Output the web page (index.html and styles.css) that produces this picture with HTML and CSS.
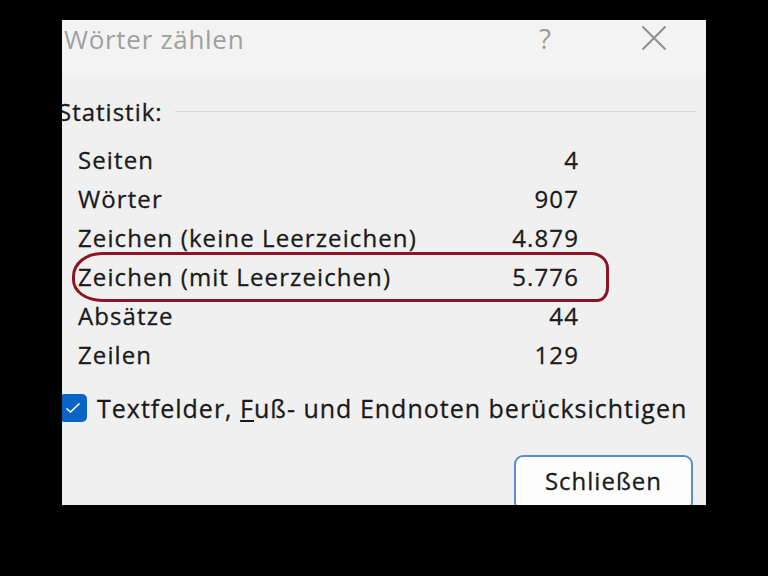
FILE: index.html
```html
<!DOCTYPE html>
<html lang="de">

<head>
    <meta charset="UTF-8">
    <meta name="viewport" content="width=device-width, initial-scale=1.0">
    <title>Wörter zählen</title>
    <link rel="stylesheet" href="styles.css">
</head>

<body>
    <div class="dialog">
        <div class="titlebar">
            <span class="title">Wörter zählen</span>
            <span class="help">?</span>
            <svg class="close" width="26" height="26" viewBox="0 0 26 26">
                <path d="M1.5 1.5 L24.5 24.5 M24.5 1.5 L1.5 24.5" stroke="#8e8e8e" stroke-width="2" fill="none"/>
            </svg>
        </div>

        <div class="group-header">
            <span class="group-label">Statistik:</span>
            <span class="group-line"></span>
        </div>

        <div class="stats">
            <div class="stat-row"><span>Seiten</span><span>4</span></div>
            <div class="stat-row"><span>Wörter</span><span>907</span></div>
            <div class="stat-row"><span>Zeichen (keine Leerzeichen)</span><span>4.879</span></div>
            <div class="stat-row"><span>Zeichen (mit Leerzeichen)</span><span>5.776</span></div>
            <div class="stat-row"><span>Absätze</span><span>44</span></div>
            <div class="stat-row"><span>Zeilen</span><span>129</span></div>
            <div class="highlight"></div>
        </div>

        <label class="check-row">
            <span class="checkbox">
                <svg width="16" height="12" viewBox="0 0 16 12">
                    <path d="M1.5 6.5 L5.5 10 L14.5 1.5" stroke="#ffffff" stroke-width="1.6" fill="none"/>
                </svg>
            </span>
            <span>Textfelder, <u>F</u>uß- und Endnoten berücksichtigen</span>
        </label>

        <div class="actions">
            <button class="close-button">Schließen</button>
        </div>
    </div>
</body>

</html>
```

FILE: styles.css
```css
body {
    margin: 0;
    background-color: #000;
    font-family: "Open Sans", "Noto Sans", sans-serif;
}

.dialog {
    width: 644px;
    height: 485px;
    margin: 20px 0 0 62px;
    background-color: #f0f0f0;
    overflow: hidden;
    display: flex;
    flex-direction: column;
    color: #1a1a1a;
}

.titlebar {
    height: 57px;
    flex-shrink: 0;
    background-color: #f3f3f3;
    display: flex;
    align-items: center;
    padding: 0 39px 0 2px;
}

.title {
    flex: 1;
    font-size: 26px;
    letter-spacing: 0.7px;
    color: #a0a0a0;
    margin-bottom: 19px;
}

.help {
    font-size: 27px;
    color: #9a9a9a;
    margin-right: 90px;
    margin-bottom: 21px;
}

.close {
    margin-bottom: 21px;
}

.group-header {
    display: flex;
    align-items: center;
    height: 28px;
    margin-top: 20px;
}

.group-label {
    font-size: 24px;
    letter-spacing: 1px;
    margin-left: -4px;
    -webkit-text-stroke: 0.3px #1a1a1a;
}

.group-line {
    flex: 1;
    height: 1px;
    background-color: #d9d9d9;
    margin: 0 10px 0 12px;
}

.stats {
    position: relative;
    width: 517px;
    box-sizing: border-box;
    padding-left: 16px;
    margin-top: 15px;
}

.stat-row {
    display: flex;
    justify-content: space-between;
    align-items: center;
    height: 39px;
    font-size: 24px;
    letter-spacing: 1.1px;
    -webkit-text-stroke: 0.3px #1a1a1a;
}

.highlight {
    position: absolute;
    left: 10px;
    top: 112px;
    width: 531px;
    height: 44px;
    border: 3px solid #8b1526;
    border-radius: 30px 18px 12px 30px / 24px 16px 14px 22px;
}

.check-row {
    display: flex;
    align-items: center;
    height: 30px;
    margin-top: 19px;
    font-size: 25px;
    letter-spacing: 1px;
    -webkit-text-stroke: 0.3px #1a1a1a;
}

.checkbox {
    width: 28px;
    height: 28px;
    flex-shrink: 0;
    margin-left: -3px;
    margin-right: 10px;
    border-radius: 5px;
    background-color: #0a64c6;
    display: flex;
    align-items: center;
    justify-content: center;
}

.actions {
    display: flex;
    justify-content: flex-end;
    margin-top: 32px;
    padding-right: 13px;
}

.close-button {
    width: 179px;
    height: 56px;
    padding-bottom: 6px;
    background-color: #fdfdfd;
    border: 2px solid #5b8fc5;
    border-radius: 9px;
    font-family: inherit;
    font-size: 24px;
    letter-spacing: 1px;
    color: #1a1a1a;
    -webkit-text-stroke: 0.3px #1a1a1a;
}
```
